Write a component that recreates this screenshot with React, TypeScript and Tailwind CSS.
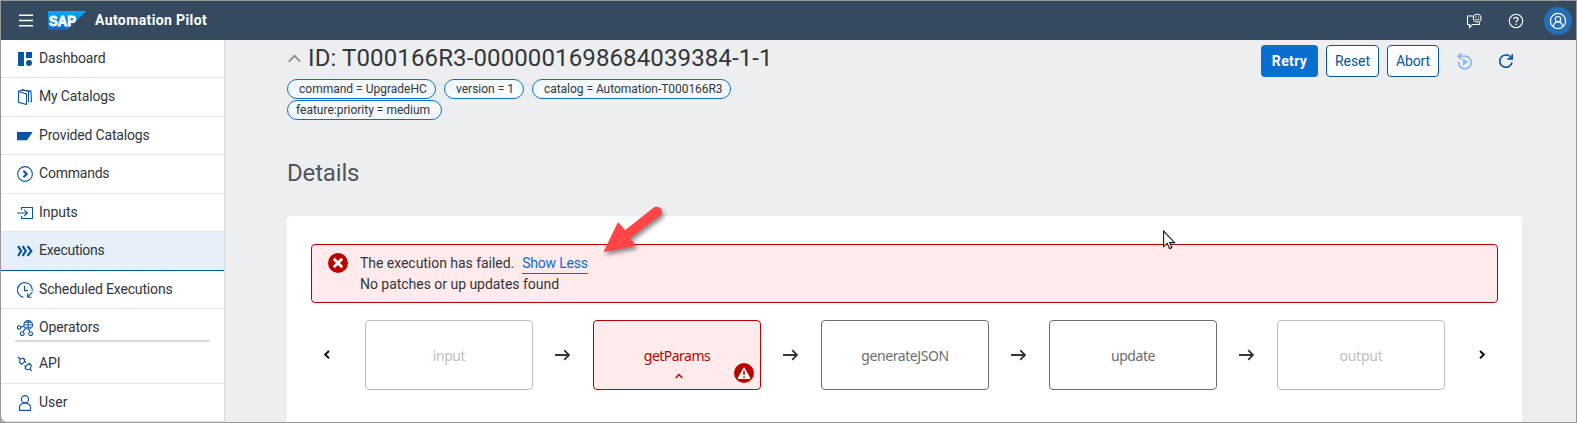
import type { ReactNode } from 'react';

const icons: Record<string, ReactNode> = {
  dashboard: (
    <g fill="#0854a0" stroke="none">
      <path d="M1 1h6v14H1zM9 1h6v6H9z" />
      <circle cx="12" cy="12" r="3" />
    </g>
  ),
  catalogs: (
    <>
      <path d="M1.5 2.5 9.5 5v10.5L1.5 13.4z" />
      <path d="M1.5 2.5 5.6 .7l5.9 1.9v10.6M5 1.1l8.9 1 .6 10.4-1.2.5" />
    </>
  ),
  provided: <path fill="#0854a0" stroke="none" d="M0 4h15.6L10 12.2H0z" />,
  commands: (
    <>
      <circle cx="8" cy="8" r="7.4" />
      <path strokeWidth="2" d="M6.4 4.8 9.7 8l-3.3 3.2" />
    </>
  ),
  inputs: (
    <>
      <path d="M4.5 5V2.5h11v11h-11V11" />
      <path d="M0 8h10M7.2 4.8 10.4 8l-3.2 3.2" />
    </>
  ),
  executions: <path strokeWidth="2.2" d="M1 3.2 4.2 8 1 12.8M5.6 3.2 8.8 8l-3.2 4.8M10.6 3.2 14.3 8l-3.7 4.8" />,
  scheduled: (
    <>
      <path d="M6.5 15.3A7.4 7.4 0 1 1 15.2 9" />
      <path d="M7.5 3.8v4.8H11M15.4 10.2l-4.6 4.7M10.6 11.2v4h4" />
    </>
  ),
  operators: (
    <>
      <circle cx="11.2" cy="4.9" r="4.3" />
      <path d="M7 4.9h8.4M11.2.6v8.6M8.3 2.5h5.8M8.3 7.3h5.8" strokeWidth=".9" />
      <circle cx="2.1" cy="7.5" r="1.7" />
      <circle cx="5.2" cy="13.6" r="1.9" />
      <circle cx="13.6" cy="13.6" r="1.9" />
      <path d="M3.8 7.1 7 6.3M6 11.9l2.6-3.6M12.8 11.8 12 9.2" />
    </>
  ),
  api: (
    <>
      <path d="M1 1 3.2 3.2M3 3.2 6.4 2.2 8 5.4 4.6 8.2 2.6 6.8zM6.4 2.4l1.8 1.4M8 5.6 9 7" />
      <path d="M9.6 9.4 12.4 7.4l2 2.2-1.4 3.6-3.2.5L8 12.1zM13 13.2l2 2M7.4 9.6 9 11M12.6 7.4 14.6 9.8" />
    </>
  ),
  user: (
    <>
      <circle cx="8" cy="4.2" r="3.6" />
      <path d="M2.5 15.4v-3.2c0-2.6 2-3.4 3.6-4h3.8c1.6.6 3.6 1.4 3.6 4v3.2z" />
    </>
  ),
};

const nav = [
  { icon: 'dashboard', label: 'Dashboard', box: 'h-[38px] border-b border-[#e5e5e5]', text: 'pb-[2px] tracking-[-0.13px]' },
  { icon: 'catalogs', label: 'My Catalogs', box: 'h-[39px] border-b border-[#e5e5e5]', text: 'pb-[2px] tracking-[-0.15px]' },
  { icon: 'provided', label: 'Provided Catalogs', box: 'h-[38px] border-b border-[#e5e5e5]', text: 'pb-[2px] tracking-[-0.18px]' },
  { icon: 'commands', label: 'Commands', box: 'h-[39px] border-b border-[#e5e5e5]', text: 'pb-[2px] tracking-[-0.22px]' },
  { icon: 'inputs', label: 'Inputs', box: 'h-[38px] border-b border-[#e5e5e5]', text: 'pb-[2px] tracking-[-0.05px]' },
  { icon: 'executions', label: 'Executions', box: 'h-[39px] border-b border-[#0854a0] bg-[#e5f0fa]', text: 'pb-[2px] tracking-[-0.27px]' },
  { icon: 'scheduled', label: 'Scheduled Executions', box: 'h-[38px] border-b border-[#e5e5e5]', text: 'pb-[2px] tracking-[-0.16px]' },
  { icon: 'operators', label: 'Operators', box: 'h-[38px]', text: 'pb-[2px] tracking-[-0.1px]' },
  { icon: 'api', label: 'API', box: 'h-[37px] border-b border-[#e5e5e5] pb-[2px]', text: 'pb-[2px] tracking-[-0.1px]' },
  { icon: 'user', label: 'User', box: 'h-[38px] border-b border-[#e5e5e5]', text: 'pb-[2px]' },
];

function NavItem({ icon, label, box, text }: (typeof nav)[number]) {
  return (
    <div className={`relative flex shrink-0 items-center pl-4 ${box}`}>
      <svg width="16" height="16" viewBox="0 0 16 16" fill="none" stroke="#0854a0" strokeWidth="1.1">
        {icons[icon]}
      </svg>
      <span className={`ml-1.5 text-sm text-[#32363a] ${text}`}>{label}</span>
      {icon === 'operators' && <div className="absolute bottom-[5px] left-[14px] h-[2px] w-[195px] bg-[#d9d9d9]" />}
    </div>
  );
}

function Chip({ children, box }: { children: ReactNode; box: string }) {
  return (
    <div className={`flex h-5 items-center rounded-full border border-[#0a6ed1] bg-[#f5faff] text-xs whitespace-nowrap text-[#32363a] ${box}`}>
      {children}
    </div>
  );
}

function Arrow() {
  return (
    <svg className="mx-[22px] shrink-0" width="16" height="12" viewBox="0 0 16 12" fill="none" stroke="#32363a">
      <path strokeWidth="2" d="M0 6h13" />
      <path strokeWidth="1.8" d="M9.2 1.2 14 6l-4.8 4.8" />
    </svg>
  );
}

const nodes = [
  { label: 'input', style: 'border-[#bfbfbf] text-[#bfbfbf]', text: 'tracking-[-0.45px]' },
  { label: 'getParams', style: 'border-[#bb0000] bg-[#ffebeb] text-[#bb0000]', text: 'tracking-[-0.52px]' },
  { label: 'generateJSON', style: 'border-[#6a6d70] text-[#6a6d70]', text: 'tracking-[-0.42px]' },
  { label: 'update', style: 'border-[#6a6d70] text-[#6a6d70]', text: 'tracking-[-0.45px]' },
  { label: 'output', style: 'border-[#bfbfbf] text-[#bfbfbf]', text: 'tracking-[-0.25px]' },
];

export default function App() {
  return (
    <div className="relative flex h-[423px] w-[1577px] flex-col overflow-hidden border border-[#999] bg-[#edeef0] font-['Roboto',sans-serif]">
      <header className="flex h-[39px] shrink-0 items-center bg-[#354a5f] pr-[4px] pl-[18px]">
        <svg width="14" height="13" viewBox="0 0 14 13" stroke="#fff" strokeWidth="1.4">
          <path d="M0 1.3h14M0 6.5h14M0 11.7h14" />
        </svg>
        <svg className="ml-[15px]" width="39" height="19" viewBox="0 0 39 19">
          <defs>
            <linearGradient id="sap" x1="0" y1="0" x2="0" y2="1">
              <stop offset="0" stopColor="#00aeef" />
              <stop offset="1" stopColor="#1d61bc" />
            </linearGradient>
          </defs>
          <path fill="url(#sap)" d="M0 0h38.5L19.5 19H0z" />
          <text x="1" y="14.8" fill="#fff" stroke="#fff" strokeWidth=".8" fontFamily="Liberation Sans, sans-serif" fontWeight="700" fontSize="15.5" textLength="27" lengthAdjust="spacingAndGlyphs">SAP</text>
        </svg>
        <span className="ml-[8px] pb-[2px] text-sm font-bold tracking-[0.38px] text-white">Automation Pilot</span>
        <div className="ml-auto flex items-center">
          <svg width="16" height="16" viewBox="0 0 16 16" fill="none" stroke="#fff" strokeWidth="1.1">
            <path d="M7 3H1.5v8.5h2v3l3-3H13.5V9.5" />
            <circle cx="11.2" cy="5.2" r="3.9" />
            <path d="M9.3 5.9c.6 1.4 3.2 1.4 3.8 0M9.8 3.6v.9M12.6 3.6v.9" />
          </svg>
          <svg className="ml-[26px]" width="16" height="16" viewBox="0 0 16 16" fill="none" stroke="#fff" strokeWidth="1.1">
            <circle cx="8" cy="8" r="6.7" />
            <path strokeWidth="1.3" d="M5.9 6.2C5.9 3.6 10 3.7 10 6.1 10 7.6 8 7.7 8 9.4M8 10.7v1.3" />
          </svg>
          <div className="ml-[20px] flex size-7 items-center justify-center rounded-full bg-[#286eb4]">
            <svg width="18" height="18" viewBox="0 0 18 18" fill="none" stroke="#fff" strokeWidth="1.2">
              <circle cx="9" cy="9" r="7.6" />
              <circle cx="9" cy="7.2" r="2.7" />
              <path d="M4.4 14.4c.2-2.6 1.6-3.8 3-4.4h3.2c1.4.6 2.8 1.8 3 4.4" />
            </svg>
          </div>
        </div>
      </header>

      <div className="flex min-h-0 flex-1">
        <div className="flex w-[224px] shrink-0 border-r border-[#d9d9d9] bg-[#b5b5b5]">
          <nav className="flex flex-1 flex-col overflow-hidden rounded-bl-[7px] bg-white">
            {nav.map((item) => (
              <NavItem key={item.icon} {...item} />
            ))}
          </nav>
        </div>

        <main className="flex flex-1 flex-col pr-[54px] pl-[62px]">
          <div className="flex h-[39px] items-start">
            <svg className="mt-[14px] ml-[1px]" width="13" height="9" viewBox="0 0 13 9" fill="none" stroke="#8a8d90" strokeWidth="1.7">
              <path d="M.8 7.6 6.5 1.8l5.7 5.8" />
            </svg>
            <h1 className="ml-[7px] pt-[2px] text-2xl tracking-[0.12px] text-[#32363a]">ID: T000166R3-0000001698684039384-1-1</h1>
            <div className="mt-[5px] mr-[8px] ml-auto flex items-center text-sm">
              <button className="h-8 w-[57px] rounded bg-[#0a6ed1] font-bold tracking-[0.35px] text-white">Retry</button>
              <button className="ml-2 h-8 w-[53px] rounded border border-[#0854a0] bg-white tracking-[-0.05px] text-[#0854a0]">Reset</button>
              <button className="ml-2 h-8 w-[52px] rounded border border-[#0854a0] bg-white tracking-[-0.1px] text-[#0854a0]">Abort</button>
              <svg className="ml-[18px]" width="16" height="18" viewBox="0 0 16 18" fill="none" stroke="#91b9e4" strokeWidth="1.8">
                <path d="M1.7 9.6A6.3 6.3 0 1 0 8 4.2H2" />
                <path d="M4.4 1.1 1.3 4.2l3.1 3.1" />
                <path fill="#91b9e4" stroke="none" d="M5.8 6.4v7.4l5.8-3.7z" />
              </svg>
              <svg className="ml-[25px]" width="16" height="16" viewBox="0 0 16 16" fill="none" stroke="#0854a0" strokeWidth="1.6">
                <path d="M14 9.3A6.2 6.2 0 1 1 12.2 3.6l1.8 1.9" />
                <path d="M14.2.9v5H9.4" />
              </svg>
            </div>
          </div>

          <div className="flex gap-2">
            <Chip box="w-[149px] pl-[11px]">command = UpgradeHC</Chip>
            <Chip box="w-[80px] pl-[11px]">version = 1</Chip>
            <Chip box="w-[199px] pl-[11px] tracking-[-0.04px]">catalog = Automation-T000166R3</Chip>
          </div>
          <div className="mt-px flex">
            <Chip box="w-[155px] pl-[8px]">feature:priority = medium</Chip>
          </div>

          <h2 className="mt-[37px] text-2xl tracking-[-0.16px] text-[#51555a]">Details</h2>

          <section className="mt-[27px] flex flex-1 flex-col rounded-t bg-white px-6 pt-[28px]">
            <div className="flex h-[59px] shrink-0 items-start rounded border border-[#bb0000] bg-[#ffebeb] pt-[8px] pl-4 text-sm leading-[21px] text-[#32363a]">
              <svg width="20" height="20" viewBox="0 0 20 20">
                <circle cx="10" cy="10" r="10" fill="#bb0000" />
                <path d="m5.8 5.8 8.4 8.4M14.2 5.8l-8.4 8.4" stroke="#fff" strokeWidth="2.8" />
              </svg>
              <div className="ml-[12px]">
                <div>
                  <span className="tracking-[-0.04px]">The execution has failed.</span>
                  <a className="ml-[8px] inline-block h-[21px] border-b border-[#0a6ed1] tracking-[-0.2px] text-[#0a6ed1]">Show Less</a>
                </div>
                <div className="tracking-[-0.03px]">No patches or up updates found</div>
              </div>
            </div>

            <div className="mt-[17px] flex h-[70px] shrink-0 items-center">
              <svg className="ml-[12px]" width="8" height="10" viewBox="0 0 8 10" fill="none" stroke="#000" strokeWidth="1.9">
                <path d="M6 1 2.2 4.6 6 8.2" />
              </svg>
              <div className="ml-[34px] flex items-center">
                {nodes.map((n, i) => (
                  <div key={n.label} className="flex items-center">
                    {i > 0 && <Arrow />}
                    <div className={`relative flex h-[70px] w-[168px] items-center justify-center rounded border font-['Noto_Sans',sans-serif] text-sm ${n.style}`}>
                      <span className={`pt-[2px] ${n.text}`}>{n.label}</span>
                      {i === 1 && (
                        <>
                          <svg className="absolute bottom-[10px] left-[81px]" width="8" height="6" viewBox="0 0 8 6" fill="none" stroke="#bb0000" strokeWidth="1.5">
                            <path d="M.7 5 4 1.6 7.3 5" />
                          </svg>
                          <svg className="absolute right-[6px] bottom-[6px]" width="20" height="20" viewBox="0 0 20 20">
                            <circle cx="10" cy="10" r="10" fill="#bb0000" />
                            <path d="M10 4.8 16 15.4H4z" fill="#fff" stroke="#fff" strokeLinejoin="round" />
                            <path d="M10 7.8v4.2M10 13.2v1.6" stroke="#bb0000" strokeWidth="1.5" />
                          </svg>
                        </>
                      )}
                    </div>
                  </div>
                ))}
              </div>
              <svg className="ml-[33px]" width="8" height="10" viewBox="0 0 8 10" fill="none" stroke="#000" strokeWidth="1.9">
                <path d="M2 1l3.8 3.6L2 8.2" />
              </svg>
            </div>
          </section>
        </main>
      </div>

      <svg className="absolute top-[199px] left-[595px] drop-shadow-[2px_3px_2px_rgba(0,0,0,0.45)]" width="80" height="64" viewBox="596 200 80 64">
        <path fill="#ff4545" d="M603.5 252 618 222l7 8.2 28.2-22.2a5 5 0 0 1 7 7.6L630 238.2l6 7.6z" />
      </svg>
      <svg className="absolute top-[229px] left-[1162px]" width="14" height="21" viewBox="0 0 14 21">
        <path fill="#fff" stroke="#1a1a24" strokeWidth="1.1" d="M.6 1v15.6l3.6-3.2 2.4 5.2 2.3-1-2.3-5h5z" />
      </svg>
    </div>
  );
}
